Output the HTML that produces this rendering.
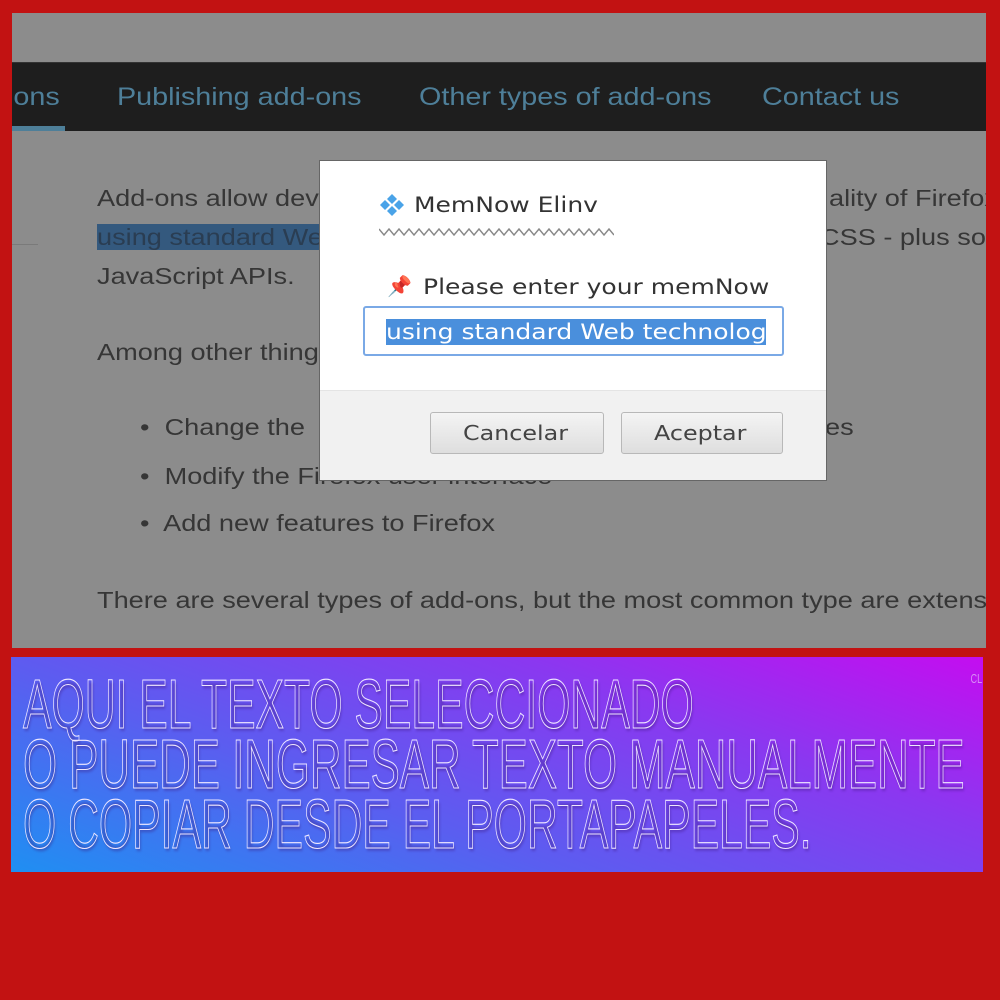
<!DOCTYPE html>
<html><head><meta charset="utf-8"><style>
*{margin:0;padding:0;box-sizing:border-box}
body{width:1000px;height:1000px;background:#c21212;position:relative;overflow:hidden;font-family:"Liberation Sans","DejaVu Sans",sans-serif}
#shot{position:absolute;left:12px;top:13px;width:974px;height:635px;background:#8c8c8c;overflow:hidden}
#nav{position:absolute;left:0;top:49px;width:974px;height:69px;background:#1e1e1e;border-top:1px solid #333}
#nav span{position:absolute;top:20px;font-size:25px;color:#4e7f99;white-space:nowrap;transform:scaleX(1.15);transform-origin:0 0}
.t{position:absolute;font-size:23.5px;color:#363636;white-space:nowrap;transform:scaleX(1.155);transform-origin:0 0}
.sel{background:#34597e;color:#2a3d52}
#dlg{position:absolute;left:319px;top:160px;width:508px;height:321px;background:#fff;border:1px solid #666;font-family:"DejaVu Sans",sans-serif}
.dx{transform:scaleX(1.19);transform-origin:0 0;white-space:nowrap}
#foot{position:absolute;left:0;top:229px;width:506px;height:90px;background:#f1f1f1;border-top:1px solid #e4e4e4}
.btn{position:absolute;top:21px;height:42px;border:1px solid #b8b8b8;border-radius:3px;background:linear-gradient(#f4f4f4,#dedede);font-size:20px;color:#444;line-height:40px}
.btn span{position:absolute;top:0}
#ban{position:absolute;left:11px;top:657px;width:972px;height:215px;background:linear-gradient(20deg,#1f8ff2 0%,#5a5ef0 35%,#8a38f0 70%,#c40df0 100%);overflow:hidden}
.bl{position:absolute;left:12px;color:transparent;-webkit-text-stroke:1.1px #f0e8ff;font-family:"Liberation Sans",sans-serif;font-size:70px;white-space:nowrap;transform-origin:0 0;text-shadow:2px 3px 3px rgba(60,20,120,.3);line-height:1;transform:scale(0.61,1)}
</style></head><body>
<div id="shot">
 <div id="nav">
  <span style="left:-5px">ions</span>
  <div style="position:absolute;left:0;top:63px;width:53px;height:5px;background:#4e7f99"></div>
  <span style="left:105px">Publishing add-ons</span>
  <span style="left:407px">Other types of add-ons</span>
  <span style="left:750px">Contact us</span>
 </div>
 <div style="position:absolute;left:0;top:231px;width:26px;height:1px;background:#7a7a7a"></div>
 <div class="t" style="left:85px;top:172px">Add-ons allow dev</div>
 <div class="t" style="left:817px;top:172px">ality of Firefox</div>
 <div class="t" style="left:85px;top:211px"><span class="sel">using standard We</span></div>
 <div class="t" style="left:808px;top:211px">CSS - plus so</div>
 <div class="t" style="left:85px;top:250px">JavaScript APIs.</div>
 <div class="t" style="left:85px;top:326px">Among other thing</div>
 <div class="t" style="left:128px;top:401px">•&nbsp; Change the</div>
 <div class="t" style="left:813px;top:401px">es</div>
 <div class="t" style="left:128px;top:450px">•&nbsp; Modify the Firefox user interface</div>
 <div class="t" style="left:128px;top:497px">•&nbsp; Add new features to Firefox</div>
 <div class="t" style="left:85px;top:574px">There are several types of add-ons, but the most common type are extens</div>
</div>
<div id="dlg">
 <svg style="position:absolute;left:59px;top:33px" width="26" height="22" viewBox="0 0 26 22"><g fill="#4aa3e8"><path d="M13 0l5 5-5 5-5-5z"/><path d="M13 12l5 5-5 5-5-5z"/><path d="M6 6l5 5-5 5-5-5z"/><path d="M20 6l5 5-5 5-5-5z"/></g></svg>
 <div class="dx" style="position:absolute;left:94px;top:32px;font-size:21px;color:#333">MemNow Elinv</div>
 <svg style="position:absolute;left:59px;top:66px" width="235" height="10" viewBox="0 0 235 10"><polyline fill="none" stroke="#888" stroke-width="1.4" points="0,2 5,8 10,2 15,8 20,2 25,8 30,2 35,8 40,2 45,8 50,2 55,8 60,2 65,8 70,2 75,8 80,2 85,8 90,2 95,8 100,2 105,8 110,2 115,8 120,2 125,8 130,2 135,8 140,2 145,8 150,2 155,8 160,2 165,8 170,2 175,8 180,2 185,8 190,2 195,8 200,2 205,8 210,2 215,8 220,2 225,8 230,2 235,8"/></svg>
 <div style="position:absolute;left:67px;top:113px;font-size:20px;color:#d22">📌</div>
 <div class="dx" style="position:absolute;left:103px;top:114px;font-size:21px;color:#333">Please enter your memNow</div>
 <div style="position:absolute;left:43px;top:145px;width:421px;height:50px;border:2px solid #7aa9e6;border-radius:3px;overflow:hidden">
  <div style="position:absolute;left:21px;top:11px;width:380px;height:26px;background:#4a8fdc;overflow:hidden">
   <div class="dx" style="color:#fff;font-size:21px;line-height:26px">using standard Web technologies</div>
  </div>
 </div>
 <div id="foot">
  <div class="btn" style="left:110px;width:174px"><span class="dx" style="left:32px">Cancelar</span></div>
  <div class="btn" style="left:301px;width:162px"><span class="dx" style="left:32px">Aceptar</span></div>
 </div>
</div>
<div id="ban">
 <div class="bl" style="top:12px">AQUI EL TEXTO SELECCIONADO</div>
 <div class="bl" style="top:72px;transform:scale(0.625,1)">O PUEDE INGRESAR TEXTO MANUALMENTE</div>
 <div class="bl" style="top:132px">O COPIAR DESDE EL PORTAPAPELES.</div>
 <div style="position:absolute;left:957px;top:14px;font-size:13px;color:#d88cf5;transform:scaleX(0.7)">CL</div>
</div>
</body></html>
